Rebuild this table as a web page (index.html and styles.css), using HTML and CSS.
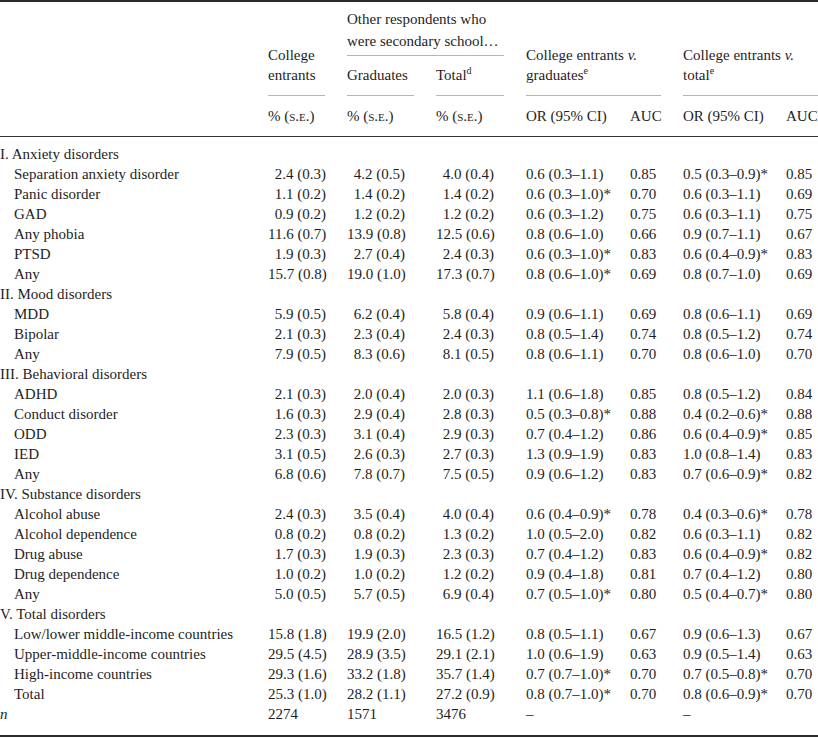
FILE: index.html
```html
<!DOCTYPE html>
<html>
<head>
<meta charset="utf-8">
<link rel="stylesheet" href="styles.css">
</head>
<body>
<table class="tbl">
  <colgroup>
    <col class="c-label"><col class="c-ce"><col class="c-gr"><col class="c-tot"><col class="c-or1"><col class="c-auc1"><col class="c-or2"><col class="c-auc2">
  </colgroup>
  <thead>
    <tr class="h1">
      <th rowspan="3"></th>
      <th rowspan="2" class="hb"><div class="hl">College<br>entrants</div></th>
      <th colspan="2" class="hb"><div class="hl hl-top">Other respondents who<br>were secondary school…</div></th>
      <th colspan="2" rowspan="2" class="hb"><div class="hl">College entrants <i>v.</i><br>graduates<sup>e</sup></div></th>
      <th colspan="2" rowspan="2" class="hb"><div class="hl hl-last">College entrants <i>v.</i><br>total<sup>e</sup></div></th>
    </tr>
    <tr class="h2">
      <th class="hb"><div class="hl">Graduates</div></th>
      <th class="hb"><div class="hl">Total<sup>d</sup></div></th>
    </tr>
    <tr class="h3">
      <th>% (<span class="sc">s.e.</span>)</th>
      <th>% (<span class="sc">s.e.</span>)</th>
      <th>% (<span class="sc">s.e.</span>)</th>
      <th>OR (95% CI)</th>
      <th>AUC</th>
      <th>OR (95% CI)</th>
      <th>AUC</th>
    </tr>
  </thead>
  <tbody id="body"></tbody>
</table>
<script src="app.js"></script>
</body>
</html>
```

FILE: app.js
```js
const rows = [
  ["I. Anxiety disorders"],
  ["Separation anxiety disorder","2.4 (0.3)","4.2 (0.5)","4.0 (0.4)","0.6 (0.3–1.1)","0.85","0.5 (0.3–0.9)*","0.85"],
  ["Panic disorder","1.1 (0.2)","1.4 (0.2)","1.4 (0.2)","0.6 (0.3–1.0)*","0.70","0.6 (0.3–1.1)","0.69"],
  ["GAD","0.9 (0.2)","1.2 (0.2)","1.2 (0.2)","0.6 (0.3–1.2)","0.75","0.6 (0.3–1.1)","0.75"],
  ["Any phobia","11.6 (0.7)","13.9 (0.8)","12.5 (0.6)","0.8 (0.6–1.0)","0.66","0.9 (0.7–1.1)","0.67"],
  ["PTSD","1.9 (0.3)","2.7 (0.4)","2.4 (0.3)","0.6 (0.3–1.0)*","0.83","0.6 (0.4–0.9)*","0.83"],
  ["Any","15.7 (0.8)","19.0 (1.0)","17.3 (0.7)","0.8 (0.6–1.0)*","0.69","0.8 (0.7–1.0)","0.69"],
  ["II. Mood disorders"],
  ["MDD","5.9 (0.5)","6.2 (0.4)","5.8 (0.4)","0.9 (0.6–1.1)","0.69","0.8 (0.6–1.1)","0.69"],
  ["Bipolar","2.1 (0.3)","2.3 (0.4)","2.4 (0.3)","0.8 (0.5–1.4)","0.74","0.8 (0.5–1.2)","0.74"],
  ["Any","7.9 (0.5)","8.3 (0.6)","8.1 (0.5)","0.8 (0.6–1.1)","0.70","0.8 (0.6–1.0)","0.70"],
  ["III. Behavioral disorders"],
  ["ADHD","2.1 (0.3)","2.0 (0.4)","2.0 (0.3)","1.1 (0.6–1.8)","0.85","0.8 (0.5–1.2)","0.84"],
  ["Conduct disorder","1.6 (0.3)","2.9 (0.4)","2.8 (0.3)","0.5 (0.3–0.8)*","0.88","0.4 (0.2–0.6)*","0.88"],
  ["ODD","2.3 (0.3)","3.1 (0.4)","2.9 (0.3)","0.7 (0.4–1.2)","0.86","0.6 (0.4–0.9)*","0.85"],
  ["IED","3.1 (0.5)","2.6 (0.3)","2.7 (0.3)","1.3 (0.9–1.9)","0.83","1.0 (0.8–1.4)","0.83"],
  ["Any","6.8 (0.6)","7.8 (0.7)","7.5 (0.5)","0.9 (0.6–1.2)","0.83","0.7 (0.6–0.9)*","0.82"],
  ["IV. Substance disorders"],
  ["Alcohol abuse","2.4 (0.3)","3.5 (0.4)","4.0 (0.4)","0.6 (0.4–0.9)*","0.78","0.4 (0.3–0.6)*","0.78"],
  ["Alcohol dependence","0.8 (0.2)","0.8 (0.2)","1.3 (0.2)","1.0 (0.5–2.0)","0.82","0.6 (0.3–1.1)","0.82"],
  ["Drug abuse","1.7 (0.3)","1.9 (0.3)","2.3 (0.3)","0.7 (0.4–1.2)","0.83","0.6 (0.4–0.9)*","0.82"],
  ["Drug dependence","1.0 (0.2)","1.0 (0.2)","1.2 (0.2)","0.9 (0.4–1.8)","0.81","0.7 (0.4–1.2)","0.80"],
  ["Any","5.0 (0.5)","5.7 (0.5)","6.9 (0.4)","0.7 (0.5–1.0)*","0.80","0.5 (0.4–0.7)*","0.80"],
  ["V. Total disorders"],
  ["Low/lower middle-income countries","15.8 (1.8)","19.9 (2.0)","16.5 (1.2)","0.8 (0.5–1.1)","0.67","0.9 (0.6–1.3)","0.67"],
  ["Upper-middle-income countries","29.5 (4.5)","28.9 (3.5)","29.1 (2.1)","1.0 (0.6–1.9)","0.63","0.9 (0.5–1.4)","0.63"],
  ["High-income countries","29.3 (1.6)","33.2 (1.8)","35.7 (1.4)","0.7 (0.7–1.0)*","0.70","0.7 (0.5–0.8)*","0.70"],
  ["Total","25.3 (1.0)","28.2 (1.1)","27.2 (0.9)","0.8 (0.7–1.0)*","0.70","0.8 (0.6–0.9)*","0.70"]
];
const body = document.getElementById("body");
rows.forEach(function (r, idx) {
  const tr = document.createElement("tr");
  if (idx === 0) tr.className = "first";
  if (r.length === 1) {
    tr.classList.add("sec");
    const td = document.createElement("td");
    td.colSpan = 8;
    td.className = "lab";
    td.textContent = r[0];
    tr.appendChild(td);
  } else {
    r.forEach(function (v, i) {
      const td = document.createElement("td");
      if (i === 0) {
        td.className = "lab ind";
        td.textContent = v;
      } else if (i <= 3) {
        const s = document.createElement("span");
        s.className = "num";
        s.textContent = v;
        td.appendChild(s);
      } else {
        td.textContent = v;
      }
      tr.appendChild(td);
    });
  }
  body.appendChild(tr);
});
const n = document.createElement("tr");
n.className = "last";
["n","2274","1571","3476","–","","–",""].forEach(function (v, i) {
  const td = document.createElement("td");
  if (i === 0) { td.className = "lab"; const e = document.createElement("i"); e.textContent = v; td.appendChild(e); }
  else td.textContent = v;
  n.appendChild(td);
});
body.appendChild(n);
```

FILE: styles.css
```css
html, body {
  margin: 0;
  padding: 0;
  background: #fff;
}
body {
  font-family: "Liberation Serif", "Times New Roman", serif;
  font-size: 15px;
  color: #1e1e1e;
}
.tbl {
  width: 818px;
  border-collapse: collapse;
  table-layout: fixed;
  border-top: 2px solid #2a2a2a;
  border-bottom: 2px solid #2a2a2a;
}
.c-label { width: 268px; }
.c-ce { width: 79px; }
.c-gr { width: 89px; }
.c-tot { width: 90px; }
.c-or1 { width: 104px; }
.c-auc1 { width: 53px; }
.c-or2 { width: 103px; }
.c-auc2 { width: 32px; }
th, td {
  padding: 0;
  text-align: left;
  font-weight: normal;
  white-space: nowrap;
  line-height: 20px;
}
.hb { vertical-align: bottom; }
.hl {
  margin-right: 22px;
  border-bottom: 1px solid #b5b5b5;
  padding-bottom: 10px;
}
.hl-top {
  line-height: 22px;
  padding-bottom: 3px;
}
.hl-last { margin-right: 0; }
.h1 { height: 55px; }
.h2 { height: 40px; }
.h3 { height: 40px; border-bottom: 1.5px solid #333; }
.h3 th { vertical-align: middle; }
sup {
  font-size: 10px;
  line-height: 0;
  vertical-align: 6px;
}
.sc { font-variant: small-caps; }
td { height: 20px; vertical-align: middle; }
.first td { padding-top: 7px; }
.last td { padding-bottom: 11px; }
.lab.ind { padding-left: 14px; }
.num {
  display: inline-block;
  width: 58px;
  text-align: right;
}
```
